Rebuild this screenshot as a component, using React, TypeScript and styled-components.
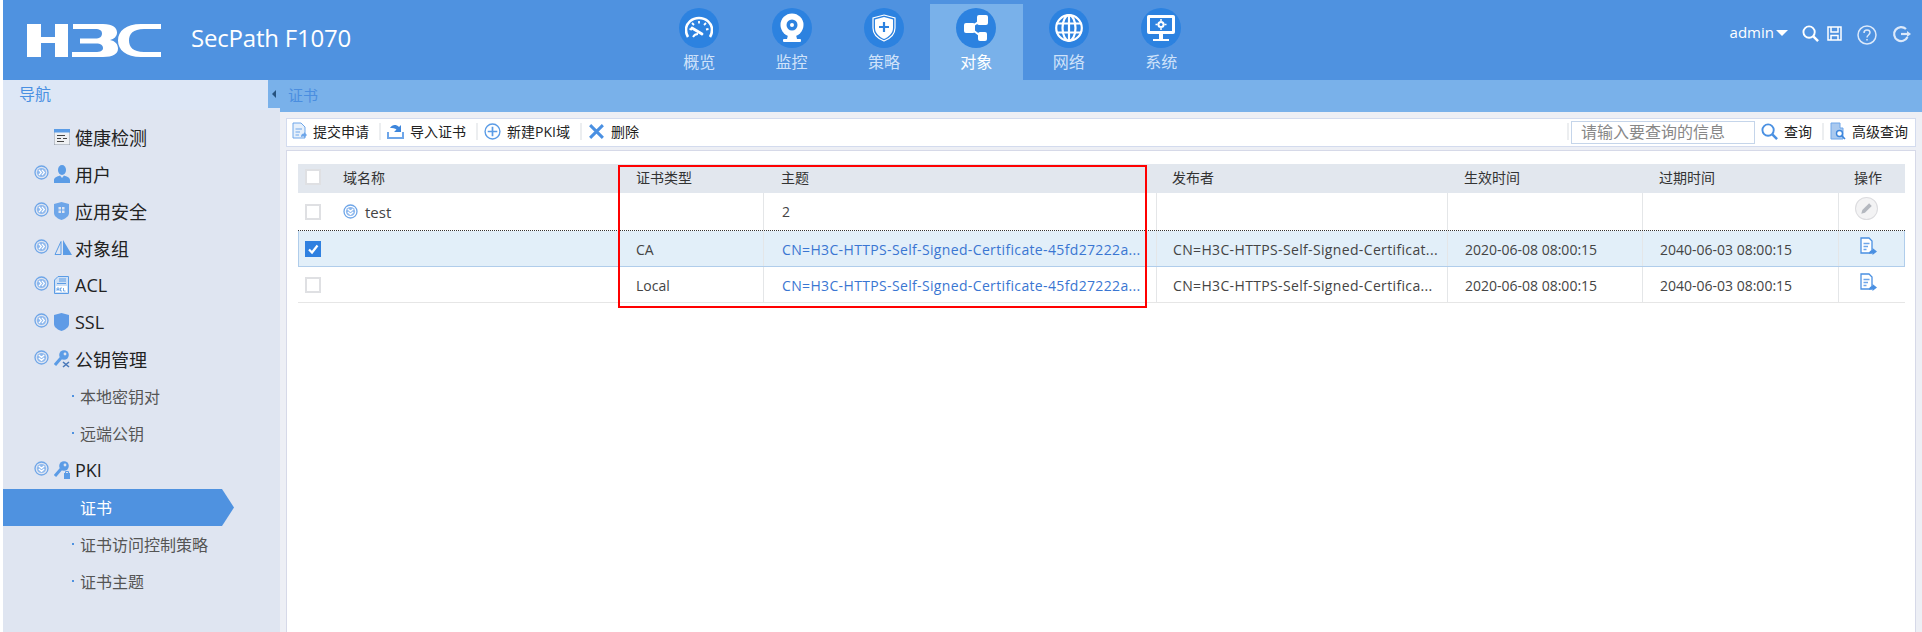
import React from "react";
import styled, { createGlobalStyle } from "styled-components";

const FONT = `"Open Sans", "Noto Sans CJK SC", "Noto Sans", sans-serif`;
const BLUE = "#4f92e0";
const ICON = "#5b9ce6";

const GlobalStyle = createGlobalStyle`
  html, body {
    margin: 0;
    padding: 0;
    background: #fff;
    font-family: ${FONT};
  }
`;

const Page = styled.div`
  width: 1922px;
  height: 632px;
  padding-left: 3px;
  box-sizing: border-box;
  overflow: hidden;
  display: flex;
  flex-direction: column;
  background: #fff;
`;

const Header = styled.header`
  height: 80px;
  flex: none;
  display: flex;
  background: ${BLUE};
  color: #fff;
`;

const Brand = styled.div`
  width: 650px;
  flex: none;
  display: flex;
  align-items: center;
  padding: 0 0 0 24px;
  box-sizing: border-box;
`;

const ProductName = styled.span`
  margin: -6px 0 0 30px;
  font-size: 24px;
  letter-spacing: -0.2px;
`;

const TopNav = styled.nav`
  display: flex;
  padding-top: 4px;
`;

const TopTab = styled.div<{ $active?: boolean }>`
  width: 92.4px;
  height: 76px;
  display: flex;
  flex-direction: column;
  align-items: center;
  font-size: 16px;
  line-height: 22px;
  color: ${(p) => (p.$active ? "#fff" : "#cfe2fa")};
  background: ${(p) => (p.$active ? "#79b1ea" : "transparent")};
`;

const TabCircle = styled.span`
  width: 40px;
  height: 40px;
  margin: 4px 0 3px;
  border-radius: 50%;
  background: #2c82e0;
  display: flex;
  align-items: center;
  justify-content: center;
`;

const UserTools = styled.div`
  margin-left: auto;
  display: flex;
  align-items: center;
  height: 66px;
  padding-right: 11px;
  font-size: 15px;
  color: #fff;
`;

const UserName = styled.span`
  margin-top: -2px;
`;

const Caret = styled.span`
  margin: 0 0 0 2px;
  border-left: 6px solid transparent;
  border-right: 6px solid transparent;
  border-top: 6px solid #fff;
`;

const TopIcon = styled.span<{ $gap: number; $drop?: number }>`
  display: flex;
  flex: none;
  margin-left: ${(p) => p.$gap}px;
  margin-top: ${(p) => p.$drop ?? 0}px;
`;

const Body = styled.div`
  flex: 1;
  display: flex;
  min-height: 0;
`;

const Sidebar = styled.aside`
  width: 277px;
  flex: none;
  background: #dfe5f1;
`;

const SideHead = styled.div`
  height: 30px;
  display: flex;
  align-items: center;
  justify-content: space-between;
  padding-left: 16px;
  background: #dde7f6;
  font-size: 16px;
  line-height: 28px;
  color: #4a90e2;
`;

const SideHeadLabel = styled.span`
  margin-top: -2px;
`;

const SideToggle = styled.span`
  width: 12px;
  height: 28px;
  align-self: flex-start;
  background: #79b1ea;
  display: flex;
  align-items: center;
  justify-content: center;

  &::before {
    content: "";
    border-top: 4px solid transparent;
    border-bottom: 4px solid transparent;
    border-right: 4px solid #26527f;
  }
`;

const Tree = styled.ul`
  list-style: none;
  margin: 9px 0 0;
  padding: 0;
`;

const Branch = styled.li`
  height: 37px;
  box-sizing: border-box;
  display: flex;
  align-items: center;
  padding: 0 0 2px 31px;
  font-size: 18px;
  color: #222;
`;

const ArrowSlot = styled.span`
  width: 20px;
  height: 16px;
  margin-top: -9px;
  flex: none;
`;

const BranchIcon = styled.span`
  width: 21px;
  flex: none;
  display: flex;
`;

const Leaf = styled.li<{ $active?: boolean }>`
  position: relative;
  width: ${(p) => (p.$active ? "231px" : "auto")};
  height: 37px;
  display: flex;
  align-items: center;
  padding: 0 0 2px 77px;
  box-sizing: border-box;
  font-size: 16px;
  color: ${(p) => (p.$active ? "#fff" : "#555")};
  background: ${(p) => (p.$active ? BLUE : "transparent")};
  clip-path: ${(p) =>
    p.$active ? "polygon(0 0, 219px 0, 231px 50%, 219px 100%, 0 100%)" : "none"};

  &::before {
    content: "";
    position: absolute;
    left: 69px;
    top: 17px;
    width: 2px;
    height: 2px;
    background: ${BLUE};
  }
`;

const Main = styled.main`
  flex: 1;
  min-width: 0;
  background: #edeff5;
  display: flex;
  flex-direction: column;
`;

const TitleBar = styled.div`
  height: 32px;
  flex: none;
  box-sizing: border-box;
  display: flex;
  align-items: center;
  padding: 0 0 3px 8px;
  background: #79b1ea;
  font-size: 15px;
  color: #4a8ee0;
`;

const Toolbar = styled.div`
  height: 29px;
  box-sizing: border-box;
  flex: none;
  margin: 6px 6px 3px 6px;
  padding: 0 7px 3px 5px;
  display: flex;
  align-items: center;
  background: #fff;
  border: 1px solid #d3dbee;
`;

const ToolButton = styled.span`
  display: flex;
  align-items: center;
  gap: 6px;
  font-size: 14px;
  color: #222;
  white-space: nowrap;
`;

const ToolSep = styled.span<{ $push?: boolean }>`
  width: 2px;
  height: 17px;
  margin: 0 ${(p) => (p.$push ? "0" : "6px")} 0 ${(p) => (p.$push ? "auto" : "10px")};
  background: #eceef0;
  flex: none;
`;

const SearchInput = styled.input`
  width: 184px;
  height: 23px;
  padding: 0 0 0 9px;
  margin: 2px 6px 0 2px;
  box-sizing: border-box;
  border: 1px solid #c5d5ea;
  outline: none;
  font-family: ${FONT};
  font-size: 16px;
  background: #fff;

  &::placeholder {
    color: #888;
  }
`;

const Panel = styled.section`
  position: relative;
  flex: 1;
  margin: 0 6px;
  padding: 13px 10px 0 11px;
  background: #fff;
  border: 1px solid #d6d9e8;
  border-bottom: 0;
`;

const COLUMNS = "33px 287px 145px 393px 291px 195px 196px 68px";

const Row = styled.div<{ $kind: "head" | "group" | "selected" | "plain" }>`
  display: grid;
  grid-template-columns: ${COLUMNS};
  box-sizing: border-box;
  height: ${(p) =>
    p.$kind === "head" ? "29px" : p.$kind === "group" ? "38px" : "36px"};
  padding-bottom: ${(p) => (p.$kind === "head" ? "3px" : "0")};
  background: ${(p) =>
    p.$kind === "head" ? "#e2e7ee" : p.$kind === "selected" ? "#e2eff9" : "#fff"};
  border-bottom: ${(p) =>
    p.$kind === "selected"
      ? "1px solid #b0cdeb"
      : p.$kind === "group"
        ? "1px dotted #333"
        : p.$kind === "plain"
          ? "1px solid #e6e6e6"
          : "0"};
  box-shadow: ${(p) =>
    p.$kind === "selected"
      ? "inset 1px 0 0 #b0cdeb, inset -1px 0 0 #b0cdeb"
      : "none"};
`;

const Cell = styled.div<{ $line?: boolean; $link?: boolean; $head?: boolean; $pad?: number; $cn?: boolean }>`
  display: flex;
  align-items: center;
  min-width: 0;
  padding-left: ${(p) => p.$pad ?? 18}px;
  font-size: 14px;
  white-space: nowrap;
  overflow: hidden;
  letter-spacing: ${(p) => (p.$cn ? "0.35px" : "0")};
  color: ${(p) => (p.$link ? "#3a76d2" : p.$head ? "#333" : "#444")};
  border-left: ${(p) => (p.$line ? "1px solid #e4e6e8" : "0")};
`;

const CertCell = styled(Cell)`
  padding-top: 2px;
`;

const CheckCell = styled.div`
  display: flex;
  align-items: center;
  padding-left: 7px;
`;

const CheckBox = styled.span<{ $checked?: boolean }>`
  width: 16px;
  height: 16px;
  box-sizing: border-box;
  display: flex;
  align-items: center;
  justify-content: center;
  background: ${(p) => (p.$checked ? "#2f80e0" : "#fff")};
  border: 2px solid ${(p) => (p.$checked ? "#2f80e0" : "#dfe0e3")};
`;

const NameCell = styled(Cell)`
  padding-left: 12px;
  gap: 7px;
`;

const GroupName = styled(NameCell)`
  font-size: 15px;
`;

const OpIcon = styled.span<{ $shift?: number }>`
  margin-left: ${(p) => p.$shift ?? 0}px;
  margin-top: -6px;
  display: flex;
`;

const RedFrame = styled.div`
  position: absolute;
  left: 331px;
  top: 14px;
  width: 529px;
  height: 143px;
  box-sizing: border-box;
  border: 2px solid #f00;
  pointer-events: none;
`;

const H3CLogo = () => (
  <svg width="134" height="33" viewBox="0 0 134 33" fill="#fff">
    <path d="M0 0H14V13H28V0H41V33H28V19H14V33H0Z" />
    <path d="M46 0H76C86 0 90 4 90 8.5C90 12.5 87 15 83 16C88 17 91 20 91 24.5C91 30 86 33 76 33H45V28H68C74 28 76 26.5 76 24C76 21.5 74 19.5 69 19.5H53V14.5H68C73 14.5 75 12.5 75 9.5C75 6.5 73 5 68 5H46Z" />
    <path d="M134 0V5H117C106 5 102 10 102 16.5C102 23 106 28 117 28H134V33H114C99 33 91 26 91 16.5C91 7 99 0 114 0Z" />
  </svg>
);

const GaugeIcon = () => (
  <svg width="28" height="24" viewBox="0 0 28 24" fill="none" stroke="#fff">
    <path d="M3 21C1.4 18.6 1 16 1 14C1 7 7 2 14 2S27 7 27 14C27 16 26.6 18.6 25 21" strokeWidth="2.6" />
    <path d="M7 7L9 9M14 5V7.5M21 7L19 9M4.5 13L7 13.5M23.5 13L21 13.5" strokeWidth="1.8" />
    <path d="M7 12L17 18" strokeWidth="2.8" strokeLinecap="round" />
    <path d="M8 21C9 19 11 18 13 18" strokeWidth="1.8" />
  </svg>
);

const CameraIcon = () => (
  <svg width="26" height="30" viewBox="0 0 26 30">
    <circle cx="13" cy="12" r="11.5" fill="#fff" />
    <circle cx="13" cy="12" r="5.5" fill="#2c82e0" />
    <circle cx="13" cy="12" r="2" fill="#fff" />
    <path d="M9 22L8 26H18L17 22Z" fill="#fff" />
    <rect x="4" y="26" width="18" height="3" rx="1" fill="#fff" />
  </svg>
);

const ShieldPlusIcon = () => (
  <svg width="24" height="28" viewBox="0 0 24 28">
    <path d="M12 1L23 4V14C23 21 17 25 12 27C7 25 1 21 1 14V4Z" fill="none" stroke="#fff" strokeWidth="1.2" />
    <path d="M12 3L21 5.5V14C21 19.5 16.5 23 12 25C7.5 23 3 19.5 3 14V5.5Z" fill="#fff" />
    <path d="M12 8V18M7 13H17" stroke="#2c82e0" strokeWidth="2.2" />
  </svg>
);

const ShareIcon = () => (
  <svg width="26" height="28" viewBox="0 0 26 28">
    <path d="M18 6L7 14L19 23" fill="none" stroke="#fff" strokeWidth="2" />
    <rect x="14" y="1" width="11" height="10" rx="2" fill="#fff" />
    <rect x="1" y="9" width="11" height="10" rx="2" fill="#fff" />
    <rect x="15" y="18" width="9" height="9" rx="2" fill="#fff" />
  </svg>
);

const GlobeIcon = () => (
  <svg width="30" height="30" viewBox="0 0 30 30" fill="none" stroke="#fff" strokeWidth="2.2">
    <circle cx="15" cy="15" r="12.8" />
    <ellipse cx="15" cy="15" rx="6.5" ry="12.8" />
    <path d="M15 2V28M2.5 10.5H27.5M2.5 19.5H27.5" />
  </svg>
);

const MonitorIcon = () => (
  <svg width="30" height="28" viewBox="0 0 30 28">
    <rect x="1.5" y="1.5" width="27" height="18" rx="1" fill="#fff" stroke="#fff" />
    <rect x="4" y="4" width="22" height="13" fill="#2c82e0" />
    <circle cx="15" cy="10.5" r="3.6" fill="#fff" />
    <circle cx="15" cy="10.5" r="1.5" fill="#2c82e0" />
    <path d="M15 5V7M15 14V16M9.5 10.5H11.5M18.5 10.5H20.500" stroke="#fff" strokeWidth="1.5" />
    <rect x="13" y="20" width="4" height="5" fill="#fff" />
    <rect x="7" y="25" width="16" height="2" fill="#fff" />
  </svg>
);

const TreeArrow = ({ open }: { open?: boolean }) => (
  <svg width="15" height="15" viewBox="0 0 15 15" fill="none" stroke="#6fa6e8">
    <circle cx="7.5" cy="7.5" r="6.5" strokeWidth="1.3" />
    <circle cx="7.5" cy="7.5" r="4.6" fill="#8fb9ee" stroke="none" />
    {open ? (
      <path d="M4.8 5L7.5 7.3L10.2 5M4.8 8L7.5 10.3L10.2 8" stroke="#fff" strokeWidth="1.3" />
    ) : (
      <path d="M5 4.8L7.3 7.5L5 10.2M8 4.8L10.3 7.5L8 10.2" stroke="#fff" strokeWidth="1.3" />
    )}
  </svg>
);

const HealthGlyph = () => (
  <svg width="16" height="16" viewBox="0 0 16 16">
    <rect width="16" height="16" fill="#eef0f3" stroke="#8d96a3" />
    <rect width="16" height="3.5" fill="#5b9ce6" />
    <path d="M3 6.5H11M3 9.5H7M9 9.5H13M3 12.5H10" stroke="#444" strokeWidth="1.2" />
  </svg>
);

const UserGlyph = () => (
  <svg width="16" height="18" viewBox="0 0 16 18" fill={ICON}>
    <ellipse cx="8" cy="5" rx="4" ry="5" />
    <path d="M0 18V15C0 12.5 3 11.5 6 10.5L8 13L10 10.5C13 11.5 16 12.5 16 15V18Z" />
  </svg>
);

const ShieldGridGlyph = () => (
  <svg width="15" height="18" viewBox="0 0 15 18">
    <path d="M7.5 0L15 2V11C15 14.5 11 16.8 7.5 18C4 16.8 0 14.5 0 11V2Z" fill="#6ea6e9" />
    <path d="M4.5 5H7V7.5H4.5ZM8 5H10.5V7.5H8ZM4.5 8.5H7V11H4.5ZM8 8.5H10.5V11H8Z" fill="#dfe5f1" />
  </svg>
);

const TrianglesGlyph = () => (
  <svg width="18" height="15" viewBox="0 0 18 15">
    <path d="M7 1.5V14.5H1Z" fill="none" stroke={ICON} />
    <path d="M9 0L18 15H9Z" fill={ICON} />
  </svg>
);

const AclGlyph = () => (
  <svg width="15" height="18" viewBox="0 0 15 18">
    <path d="M4 0.5H14.5V17.5H0.5V4Z" fill="#cfe0f5" stroke={ICON} />
    <rect x="2" y="10" width="11" height="6" fill="#fff" />
    <path d="M5 3H12M5 5H12M3 7.5H12" stroke={ICON} />
    <path d="M3 15V12H5V15M3 13.5H5M8 12H6.5V15H8M9.5 12V15H11.5" fill="none" stroke={ICON} strokeWidth=".8" />
  </svg>
);

const ShieldGlyph = () => (
  <svg width="15" height="18" viewBox="0 0 15 18">
    <path d="M7.5 0L15 2V11C15 14.5 11 16.8 7.5 18C4 16.8 0 14.5 0 11V2Z" fill="#5f9be6" />
  </svg>
);

const KeyGlyph = ({ lock }: { lock?: boolean }) => (
  <svg width="16" height="18" viewBox="0 0 16 18">
    <path d="M1 15L7 8" stroke={ICON} strokeWidth="3" />
    <circle cx="10" cy="5" r="4.8" fill={ICON} />
    <circle cx="11" cy="4" r="1.4" fill="#dfe5f1" />
    {lock ? (
      <g>
        <rect x="10" y="12" width="6" height="6" fill={ICON} />
        <path d="M11.5 12V10.5H14.5V12" fill="none" stroke={ICON} />
      </g>
    ) : (
      <path d="M9 12L15 17M15 12L9 17" stroke="#4a78b8" strokeWidth="1.6" />
    )}
  </svg>
);

const SubmitIcon = () => (
  <svg width="15" height="18" viewBox="0 0 15 18">
    <path d="M1 1H9L13 5V16H1Z" fill="#e6f0fb" stroke="#6ea6e9" />
    <path d="M3.5 7H10M3.5 10H8M3.5 13H7" stroke="#6ea6e9" />
    <path d="M9 15C9 12 11 11.5 12 11.5V10L15 13L12 16V14.5C11 14.5 10 14.5 9 15Z" fill="#6ea6e9" />
  </svg>
);

const ImportIcon = () => (
  <svg width="17" height="16" viewBox="0 0 17 16">
    <path d="M1 9V15H16V9" fill="none" stroke="#6ea6e9" strokeWidth="2" />
    <path d="M3 5C5 1.5 9 1 12 4L14 2V9H7L9.5 6.5C8 5 5.5 5 3 5Z" fill="#3d86dc" />
  </svg>
);

const PlusCircleIcon = () => (
  <svg width="17" height="17" viewBox="0 0 16 16" fill="none" stroke="#5b9ce6">
    <circle cx="8" cy="8" r="7" strokeWidth="1.3" />
    <path d="M8 3.5V12.5M3.5 8H12.5" strokeWidth="1.6" />
  </svg>
);

const CrossIcon = () => (
  <svg width="17" height="17" viewBox="0 0 16 16">
    <path d="M2 2L14 14M14 2L2 14" stroke="#4a90e2" strokeWidth="2.8" />
  </svg>
);

const SearchIcon = ({ color }: { color: string }) => (
  <svg width="17" height="17" viewBox="0 0 18 18" fill="none" stroke={color}>
    <circle cx="7.5" cy="7.5" r="6" strokeWidth="2" />
    <path d="M12 12L17 17" strokeWidth="2.6" />
  </svg>
);

const AdvancedSearchIcon = () => (
  <svg width="16" height="18" viewBox="0 0 16 18">
    <path d="M1 1H10V6H13V17H1Z" fill="#a9c9ef" stroke="#6ea6e9" />
    <circle cx="9.5" cy="11.5" r="3" fill="#fff" stroke="#3d86dc" strokeWidth="1.4" />
    <path d="M11.5 13.5L15 17" stroke="#3d86dc" strokeWidth="1.6" />
  </svg>
);

const PencilIcon = () => (
  <svg width="23" height="23" viewBox="0 0 22 22">
    <circle cx="11" cy="11" r="10.5" fill="#f3f3f4" stroke="#dcdcdf" />
    <path d="M6 16L7 12.5L13.5 6L16 8.5L9.5 15Z" fill="#b4b8bf" />
  </svg>
);

const DocIcon = () => (
  <svg width="17" height="18" viewBox="0 0 17 18">
    <path d="M1 1H9L12 4V16H1Z" fill="#fff" stroke="#4a90e2" strokeWidth="1.3" />
    <path d="M3.5 6.5H9.5M3.5 9.5H8M3.5 12.5H6.5" stroke="#6ea6e9" strokeWidth="1.3" />
    <path d="M9 17C9 14 11 13 12.5 13V11L17 14.5L12.5 18V16C11 16 10 16 9 17Z" fill="#4a90e2" />
  </svg>
);

const topTabs = [
  { label: "概览", icon: <GaugeIcon /> },
  { label: "监控", icon: <CameraIcon /> },
  { label: "策略", icon: <ShieldPlusIcon /> },
  { label: "对象", icon: <ShareIcon />, active: true },
  { label: "网络", icon: <GlobeIcon /> },
  { label: "系统", icon: <MonitorIcon /> },
];

const certRows = [
  { kind: "selected" as const, type: "CA", issuer: "CN=H3C-HTTPS-Self-Signed-Certificat..." },
  { kind: "plain" as const, type: "Local", issuer: "CN=H3C-HTTPS-Self-Signed-Certifica..." },
];

const App: React.FC = () => {
  return (
    <Page>
      <GlobalStyle />
      <Header>
        <Brand>
          <H3CLogo />
          <ProductName>SecPath F1070</ProductName>
        </Brand>
        <TopNav>
          {topTabs.map((tab) => (
            <TopTab key={tab.label} $active={tab.active}>
              <TabCircle>{tab.icon}</TabCircle>
              {tab.label}
            </TopTab>
          ))}
        </TopNav>
        <UserTools>
          <UserName>admin</UserName>
          <Caret />
          <TopIcon $gap={14}>
            <SearchIcon color="#fff" />
          </TopIcon>
          <TopIcon $gap={8}>
            <svg width="15" height="15" viewBox="0 0 15 15" fill="none" stroke="#fff" strokeWidth="1.5">
              <path d="M1 1H14V14H1ZM4 1V6H11V1M4 14V9.5H11V14" />
            </svg>
          </TopIcon>
          <TopIcon $gap={15} $drop={3}>
            <svg width="20" height="20" viewBox="0 0 20 20" fill="none" stroke="#dce9fa" strokeWidth="1.5">
              <circle cx="10" cy="10" r="9" />
              <path d="M7 8C7 6 8.5 5 10 5C11.8 5 13 6.2 13 7.6C13 10 10 10 10 12.5M10 14V15.5" />
            </svg>
          </TopIcon>
          <TopIcon $gap={15} $drop={2}>
            <svg width="19" height="18" viewBox="0 0 19 18" fill="none" stroke="#dce9fa" strokeWidth="2.2">
              <path d="M14 4A7 7 0 1 0 15.5 12" />
              <path d="M9 9H16" />
              <path d="M15 6L19 9L15 12Z" fill="#dce9fa" stroke="none" />
            </svg>
          </TopIcon>
        </UserTools>
      </Header>
      <Body>
        <Sidebar>
          <SideHead>
            <SideHeadLabel>导航</SideHeadLabel>
            <SideToggle />
          </SideHead>
          <Tree>
            <Branch>
              <ArrowSlot />
              <BranchIcon>
                <HealthGlyph />
              </BranchIcon>
              健康检测
            </Branch>
            <Branch>
              <ArrowSlot>
                <TreeArrow />
              </ArrowSlot>
              <BranchIcon>
                <UserGlyph />
              </BranchIcon>
              用户
            </Branch>
            <Branch>
              <ArrowSlot>
                <TreeArrow />
              </ArrowSlot>
              <BranchIcon>
                <ShieldGridGlyph />
              </BranchIcon>
              应用安全
            </Branch>
            <Branch>
              <ArrowSlot>
                <TreeArrow />
              </ArrowSlot>
              <BranchIcon>
                <TrianglesGlyph />
              </BranchIcon>
              对象组
            </Branch>
            <Branch>
              <ArrowSlot>
                <TreeArrow />
              </ArrowSlot>
              <BranchIcon>
                <AclGlyph />
              </BranchIcon>
              ACL
            </Branch>
            <Branch>
              <ArrowSlot>
                <TreeArrow />
              </ArrowSlot>
              <BranchIcon>
                <ShieldGlyph />
              </BranchIcon>
              SSL
            </Branch>
            <Branch>
              <ArrowSlot>
                <TreeArrow open />
              </ArrowSlot>
              <BranchIcon>
                <KeyGlyph />
              </BranchIcon>
              公钥管理
            </Branch>
            <Leaf>本地密钥对</Leaf>
            <Leaf>远端公钥</Leaf>
            <Branch>
              <ArrowSlot>
                <TreeArrow open />
              </ArrowSlot>
              <BranchIcon>
                <KeyGlyph lock />
              </BranchIcon>
              PKI
            </Branch>
            <Leaf $active>证书</Leaf>
            <Leaf>证书访问控制策略</Leaf>
            <Leaf>证书主题</Leaf>
          </Tree>
        </Sidebar>
        <Main>
          <TitleBar>证书</TitleBar>
          <Toolbar>
            <ToolButton>
              <SubmitIcon />
              提交申请
            </ToolButton>
            <ToolSep />
            <ToolButton>
              <ImportIcon />
              导入证书
            </ToolButton>
            <ToolSep />
            <ToolButton>
              <PlusCircleIcon />
              新建PKI域
            </ToolButton>
            <ToolSep />
            <ToolButton>
              <CrossIcon />
              删除
            </ToolButton>
            <ToolSep $push />
            <SearchInput placeholder="请输入要查询的信息" readOnly />
            <ToolButton>
              <SearchIcon color="#4a90e2" />
              查询
            </ToolButton>
            <ToolSep />
            <ToolButton>
              <AdvancedSearchIcon />
              高级查询
            </ToolButton>
          </Toolbar>
          <Panel>
            <Row $kind="head">
              <CheckCell>
                <CheckBox />
              </CheckCell>
              <NameCell $head>域名称</NameCell>
              <Cell $head>证书类型</Cell>
              <Cell $head>主题</Cell>
              <Cell $head $pad={16}>发布者</Cell>
              <Cell $head $pad={17}>生效时间</Cell>
              <Cell $head $pad={17}>过期时间</Cell>
              <Cell $head $pad={16}>操作</Cell>
            </Row>
            <Row $kind="group">
              <CheckCell>
                <CheckBox />
              </CheckCell>
              <GroupName>
                <TreeArrow open />
                test
              </GroupName>
              <Cell />
              <Cell $line>2</Cell>
              <Cell $line />
              <Cell $line />
              <Cell $line />
              <Cell $line $pad={16}>
                <OpIcon>
                  <PencilIcon />
                </OpIcon>
              </Cell>
            </Row>
            {certRows.map((row) => (
              <Row key={row.type} $kind={row.kind}>
                <CheckCell>
                  <CheckBox $checked={row.kind === "selected"}>
                    {row.kind === "selected" && (
                      <svg width="12" height="12" viewBox="0 0 12 12" fill="none" stroke="#fff" strokeWidth="2.2">
                        <path d="M2 6.5L5 9.5L10.5 2.5" />
                      </svg>
                    )}
                  </CheckBox>
                </CheckCell>
                <Cell />
                <CertCell>{row.type}</CertCell>
                <CertCell $line $link $cn>CN=H3C-HTTPS-Self-Signed-Certificate-45fd27222a...</CertCell>
                <CertCell $line $pad={16} $cn>{row.issuer}</CertCell>
                <CertCell $line $pad={17}>2020-06-08 08:00:15</CertCell>
                <CertCell $line $pad={17}>2040-06-03 08:00:15</CertCell>
                <Cell $line $pad={16}>
                  <OpIcon $shift={5}>
                    <DocIcon />
                  </OpIcon>
                </Cell>
              </Row>
            ))}
            <RedFrame />
          </Panel>
        </Main>
      </Body>
    </Page>
  );
};

export default App;
